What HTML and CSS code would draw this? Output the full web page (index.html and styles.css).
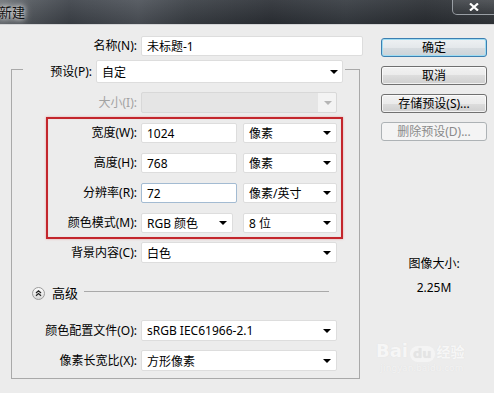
FILE: index.html
```html
<!DOCTYPE html>
<html lang="zh-CN">
<head>
  <meta charset="UTF-8">
  <title>新建</title>
  <link rel="stylesheet" href="styles.css">
</head>
<body>
  <div class="titlebar">
    <span class="title">新建</span>
    <div class="close-btn">
      <svg width="10" height="8" viewBox="0 0 10 8"><path d="M1 0.5 L9 7.5 M9 0.5 L1 7.5" stroke="#fff" stroke-width="2.2"/></svg>
    </div>
  </div>

  <div class="dialog">
    <div class="main">
      <div class="row name-row">
        <label class="lbl lbl-name">名称(N):</label>
        <div class="field w-name">未标题-1</div>
      </div>

      <div class="group">
        <div class="row preset">
          <label class="lbl lbl-preset">预设(P):</label>
          <div class="field select w-preset"><span>自定</span><i class="arrow"></i></div>
        </div>

        <div class="row size-row">
          <label class="lbl lbl-group disabled">大小(I):</label>
          <div class="field select disabled w-wide"><span></span><i class="arrow"></i></div>
        </div>

        <div class="highlight">
          <div class="row">
            <label class="lbl lbl-red">宽度(W):</label>
            <div class="field w-num">1024</div>
            <div class="field select w-unit"><span>像素</span><i class="arrow"></i></div>
          </div>
          <div class="row">
            <label class="lbl lbl-red">高度(H):</label>
            <div class="field w-num">768</div>
            <div class="field select w-unit"><span>像素</span><i class="arrow"></i></div>
          </div>
          <div class="row">
            <label class="lbl lbl-red">分辨率(R):</label>
            <div class="field w-num focus">72</div>
            <div class="field select w-unit"><span>像素/英寸</span><i class="arrow"></i></div>
          </div>
          <div class="row">
            <label class="lbl lbl-red">颜色模式(M):</label>
            <div class="field select w-mode"><span>RGB 颜色</span><i class="arrow"></i></div>
            <div class="field select w-unit"><span>8 位</span><i class="arrow"></i></div>
          </div>
        </div>

        <div class="row bg-row">
          <label class="lbl lbl-group">背景内容(C):</label>
          <div class="field select w-wide"><span>白色</span><i class="arrow"></i></div>
        </div>

        <div class="advanced">
          <svg class="adv-icon" width="13" height="13" viewBox="0 0 13 13">
            <defs>
              <linearGradient id="advfill" x1="0" y1="0" x2="0" y2="1">
                <stop offset="0" stop-color="#ffffff"/>
                <stop offset="1" stop-color="#d6d6d6"/>
              </linearGradient>
            </defs>
            <circle cx="6.5" cy="6.5" r="6" fill="url(#advfill)" stroke="#9a9a9a"/>
            <path d="M4 6 L6.5 3.8 L9 6 M4 8.8 L6.5 6.6 L9 8.8" fill="none" stroke="#222" stroke-width="1.2"/>
          </svg>
          <span class="adv-text">高级</span>
          <span class="adv-line"></span>
        </div>

        <div class="row profile-row">
          <label class="lbl lbl-group">颜色配置文件(O):</label>
          <div class="field select w-wide"><span>sRGB IEC61966-2.1</span><i class="arrow"></i></div>
        </div>
        <div class="row aspect-row">
          <label class="lbl lbl-group">像素长宽比(X):</label>
          <div class="field select w-wide"><span>方形像素</span><i class="arrow"></i></div>
        </div>
      </div>
    </div>

    <div class="side">
      <button class="btn default">确定</button>
      <button class="btn">取消</button>
      <button class="btn">存储预设(S)...</button>
      <button class="btn" disabled>删除预设(D)...</button>

      <div class="img-size">图像大小:</div>
      <div class="img-value">2.25M</div>
    </div>
  </div>

  <div class="watermark">
    <div class="wm-logo"><span class="wm-bai">Bai</span><span class="wm-du">du</span><span class="wm-jy">经验</span></div>
    <div class="wm-url">jingyan.baidu.com</div>
  </div>
</body>
</html>
```

FILE: styles.css
```css
body {
  margin: 0;
  width: 494px;
  height: 393px;
  overflow: hidden;
  position: relative;
  background-color: #ececec;
  font-family: "Noto Sans", "Noto Sans CJK SC", sans-serif;
  font-size: 12px;
  color: #000;
}

/* barre de titre */
.titlebar {
  height: 24px;
  display: flex;
  justify-content: space-between;
  align-items: flex-start;
  border-bottom: 1px solid #d3d4d6;
  background:
    linear-gradient(180deg, rgba(255,255,255,0.07), rgba(0,0,0,0.12)),
    linear-gradient(90deg, #6d7277 0%, #52575d 6%, #3e434a 14%, #4e535a 28%, #3b4046 38%, #2d3137 55%, #373c42 70%, #2b2f34 86%, #33373c 100%);
}
.title {
  margin: 4px 0 0 -1px;
  font-size: 13px;
  line-height: 16px;
  color: #111;
  text-shadow: 0 0 5px #fff, 0 0 9px rgba(255,255,255,0.9);
}
.close-btn {
  width: 42px;
  height: 15px;
  box-sizing: border-box;
  display: flex;
  align-items: center;
  justify-content: center;
  border: 1px solid rgba(190,196,202,0.7);
  border-top: none;
  border-right: none;
  border-radius: 0 0 0 5px;
  background: linear-gradient(rgba(255,255,255,0.1), rgba(255,255,255,0.02));
}

/* dialogue */
.dialog {
  display: flex;
  align-items: flex-start;
}
.main {
  width: 363px;
}
.row {
  display: flex;
  align-items: center;
}
.lbl {
  text-align: right;
  white-space: nowrap;
  margin-right: 4px;
  line-height: 16px;
}
.lbl.disabled {
  color: #a3a3a3;
}
.lbl-name { width: 137px; }
.lbl-preset { width: 69px; }
.lbl-group { width: 125px; }
.lbl-red { width: 89px; }

.field {
  box-sizing: border-box;
  height: 21px;
  display: flex;
  align-items: center;
  justify-content: space-between;
  padding: 0 5px;
  background: #fff;
  border: 1px solid #dddddd;
  border-radius: 2px;
  white-space: nowrap;
}
.field.focus {
  border-color: #a3bbd2;
}
.arrow {
  width: 0;
  height: 0;
  border-left: 4px solid transparent;
  border-right: 4px solid transparent;
  border-top: 4px solid #000;
}
.select.disabled {
  background: linear-gradient(90deg, #e5e5e5 calc(100% - 18px), #f3f3f3 0);
  border-color: #d8d8d8;
  padding-right: 4px;
}
.select.disabled .arrow {
  border-top-color: #b5b5b5;
}

.w-name { width: 222px; height: 20px; }
.w-preset { width: 247px; height: 23px; padding-right: 4px; }
.w-wide { width: 196px; }
.w-num { width: 96px; height: 20px; margin-right: 6px; }
.w-unit { width: 94px; height: 20px; }
.w-mode { width: 92px; height: 20px; margin-right: 10px; }

.name-row {
  margin-top: 11px;
}

/* groupe */
.group {
  box-sizing: border-box;
  width: 349px;
  margin: 13px 0 0 11px;
  padding-bottom: 7px;
  border: 1px solid #a9a9a9;
}
.preset {
  width: fit-content;
  margin: -10px 0 0 11px;
  padding-right: 2px;
  background-color: #ececec;
}
.size-row {
  margin-top: 9px;
}
.highlight {
  box-sizing: border-box;
  width: 297px;
  margin: 4px 0 0 34px;
  padding: 4px 0;
  display: flex;
  flex-direction: column;
  gap: 10px;
  border: 2px solid #c3262c;
  box-shadow: 0 0 2px rgba(230,110,110,0.6), inset 0 0 1px rgba(230,110,110,0.5);
}
.bg-row {
  margin-top: 3px;
}
.advanced {
  display: flex;
  align-items: flex-start;
  height: 14px;
  margin-top: 23px;
}
.adv-icon {
  margin: 1px 7px 0 20px;
}
.adv-text {
  font-size: 13px;
  line-height: 14px;
  margin-right: 6px;
}
.adv-line {
  flex: 1;
  height: 1px;
  margin: 5px 30px 0 0;
  background-color: #a9a9a9;
}
.profile-row {
  margin-top: 20px;
}
.aspect-row {
  margin-top: 9px;
}

/* boutons */
.side {
  width: 106px;
  margin: 13px 0 0 18px;
  display: flex;
  flex-direction: column;
  gap: 9px;
}
.btn {
  height: 19px;
  padding: 0;
  font-family: "Noto Sans", "Noto Sans CJK SC", sans-serif;
  font-size: 12px;
  line-height: 16px;
  color: #000;
  border: 1px solid #707070;
  border-radius: 3px;
  background: linear-gradient(#f2f2f2 0%, #ebebeb 50%, #dddddd 50%, #cfcfcf 100%);
  box-shadow: inset 0 0 0 1px rgba(255,255,255,0.7);
}
.btn.default {
  border-color: #3c7fb1;
  background: linear-gradient(#eef1f3 0%, #e4e8eb 50%, #d8dde1 50%, #ccd3d8 100%);
  box-shadow: inset 0 0 0 1px #9edcf2;
}
.btn:disabled {
  color: #8a8a8a;
  border-color: #adb2b5;
  background: #f4f4f4;
  box-shadow: none;
}
.img-size {
  margin-top: 106px;
  text-align: center;
  line-height: 16px;
}
.img-value {
  margin-top: -1px;
  text-align: center;
  line-height: 16px;
}

/* filigrane */
.watermark {
  position: absolute;
  left: 376px;
  top: 340px;
  width: 92px;
  color: rgba(255,255,255,0.75);
  text-shadow: 0 0 1px rgba(160,160,160,0.2);
}
.wm-logo {
  display: flex;
  align-items: flex-end;
  font-family: "DejaVu Sans", sans-serif;
  font-weight: bold;
  line-height: 22px;
}
.wm-bai {
  font-size: 18px;
}
.wm-du {
  font-size: 13px;
  margin: 0 2px;
  padding: 0 3px;
  border-radius: 9px;
  background-color: rgba(255,255,255,0.45);
  color: rgba(228,228,228,0.9);
  line-height: 16px;
}
.wm-jy {
  font-family: "Noto Sans CJK SC", sans-serif;
  font-size: 14px;
}
.wm-url {
  font-size: 9px;
  line-height: 11px;
  text-align: center;
  letter-spacing: 0.3px;
  color: rgba(255,255,255,0.6);
}
```
